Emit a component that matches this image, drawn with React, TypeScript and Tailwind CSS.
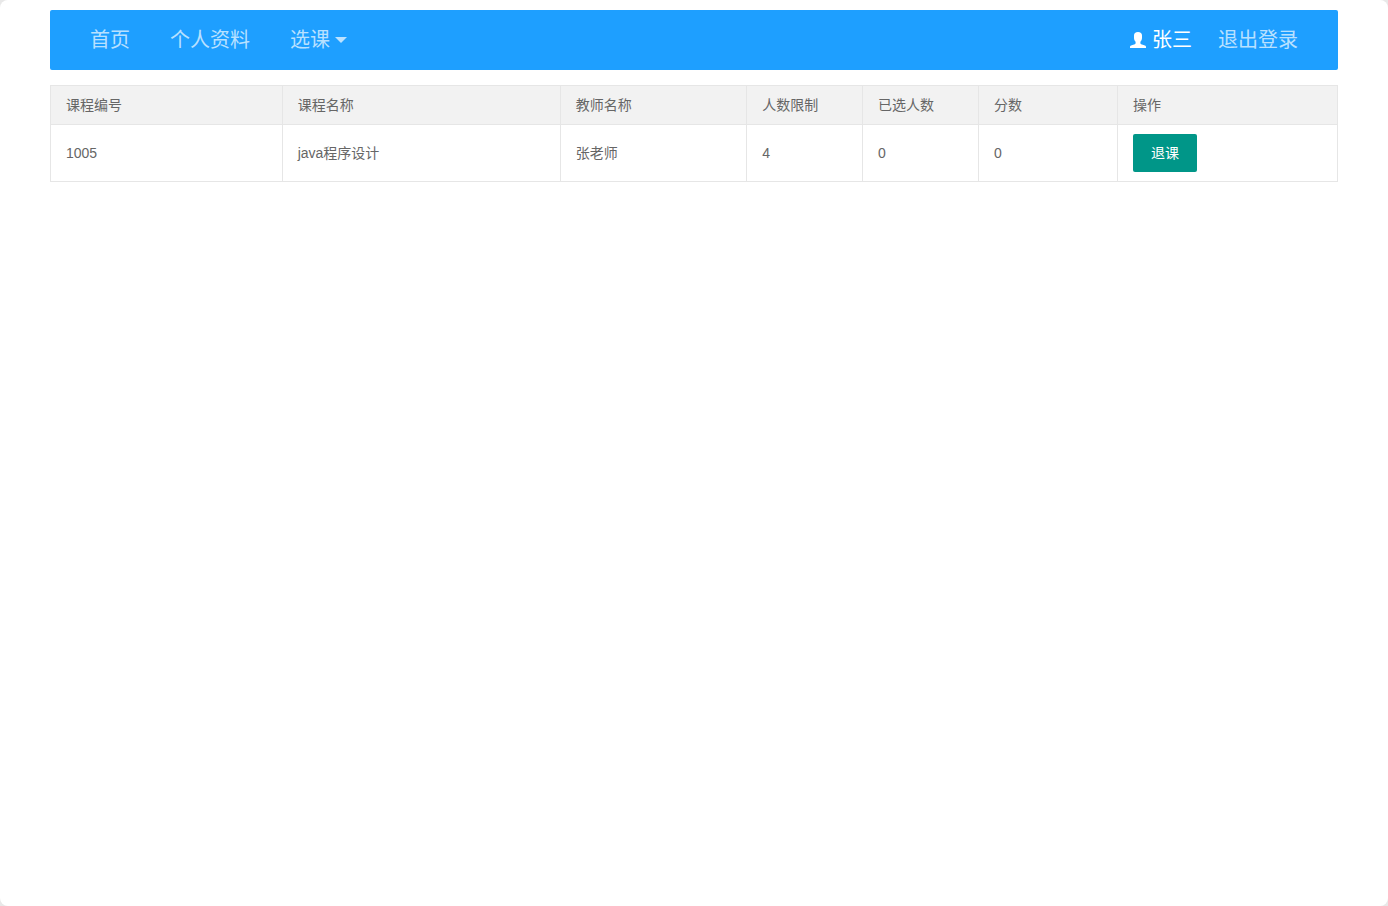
interface Course {
  id: string;
  name: string;
  teacher: string;
  limit: number;
  selected: number;
  score: number;
}

const courses: Course[] = [
  { id: '1005', name: 'java程序设计', teacher: '张老师', limit: 4, selected: 0, score: 0 },
];

const columns = [
  { title: '课程编号', width: 'w-[18%]' },
  { title: '课程名称', width: 'w-[21.6%]' },
  { title: '教师名称', width: 'w-[14.5%]' },
  { title: '人数限制', width: 'w-[9%]' },
  { title: '已选人数', width: 'w-[9%]' },
  { title: '分数', width: 'w-[10.8%]' },
  { title: '操作', width: 'w-auto' },
];

const linkClass = 'text-white/70 hover:text-white';

const NavBar = () => (
  <nav className="flex h-15 items-center justify-between rounded-xs bg-[#1e9fff] px-10 text-xl">
    <div className="flex items-center gap-10">
      <a href="#home" className={linkClass}>首页</a>
      <a href="#profile" className={linkClass}>个人资料</a>
      <a href="#courses" className={`${linkClass} flex items-center gap-[5px]`}>
        选课
        <svg className="h-[6px] w-3" viewBox="0 0 12 6" fill="currentColor" aria-hidden="true">
          <path d="M0 0h12L6 6z" />
        </svg>
      </a>
    </div>
    <div className="flex items-center gap-[26px]">
      <span className="flex items-center gap-[6px] text-white">
        <svg className="h-4 w-4" viewBox="0 0 16 16" fill="currentColor" aria-hidden="true">
          <path d="M8 0C5.4 0 4 1.3 4 3.500v2.300c0 1.700.6 3 1.600 4v1.400c0 .5-.3.8-.8 1L1 13.500C.3 13.800 0 14.200 0 14.900V16h16v-1.100c0-.7-.3-1.100-1-1.400l-3.800-1.300c-.5-.2-.8-.5-.8-1V9.800c1-1 1.600-2.300 1.600-4V3.500C12 1.300 10.600 0 8 0z" />
        </svg>
        张三
      </span>
      <a href="#logout" className={linkClass}>退出登录</a>
    </div>
  </nav>
);

const CourseTable = () => (
  <table className="w-full table-fixed border-collapse text-sm leading-5 text-[#666]">
    <thead>
      <tr className="bg-[#f2f2f2]">
        {columns.map((col) => (
          <th
            key={col.title}
            scope="col"
            className={`${col.width} border border-[#e6e6e6] px-[15px] py-[9px] text-left font-normal`}
          >
            {col.title}
          </th>
        ))}
      </tr>
    </thead>
    <tbody>
      {courses.map((course) => (
        <tr key={course.id} className="hover:bg-[#f2f2f2]">
          {[course.id, course.name, course.teacher, course.limit, course.selected, course.score].map((value, i) => (
            <td key={i} className="border border-[#e6e6e6] px-[15px] py-[9px]">{value}</td>
          ))}
          <td className="border border-[#e6e6e6] px-[15px] py-[9px]">
            <button
              type="button"
              className="block h-[38px] cursor-pointer rounded-xs bg-[#009688] px-[18px] text-white hover:opacity-80"
            >
              退课
            </button>
          </td>
        </tr>
      ))}
    </tbody>
  </table>
);

const App = () => {
  return (
    <div className="bg-[#e8e8e8]">
      <div className="flex min-h-screen flex-col gap-[15px] rounded-lg bg-white px-[50px] py-[10px] font-['Liberation_Sans','Noto_Sans_CJK_SC',sans-serif]">
        <NavBar />
        <CourseTable />
      </div>
    </div>
  );
};

export default App;
